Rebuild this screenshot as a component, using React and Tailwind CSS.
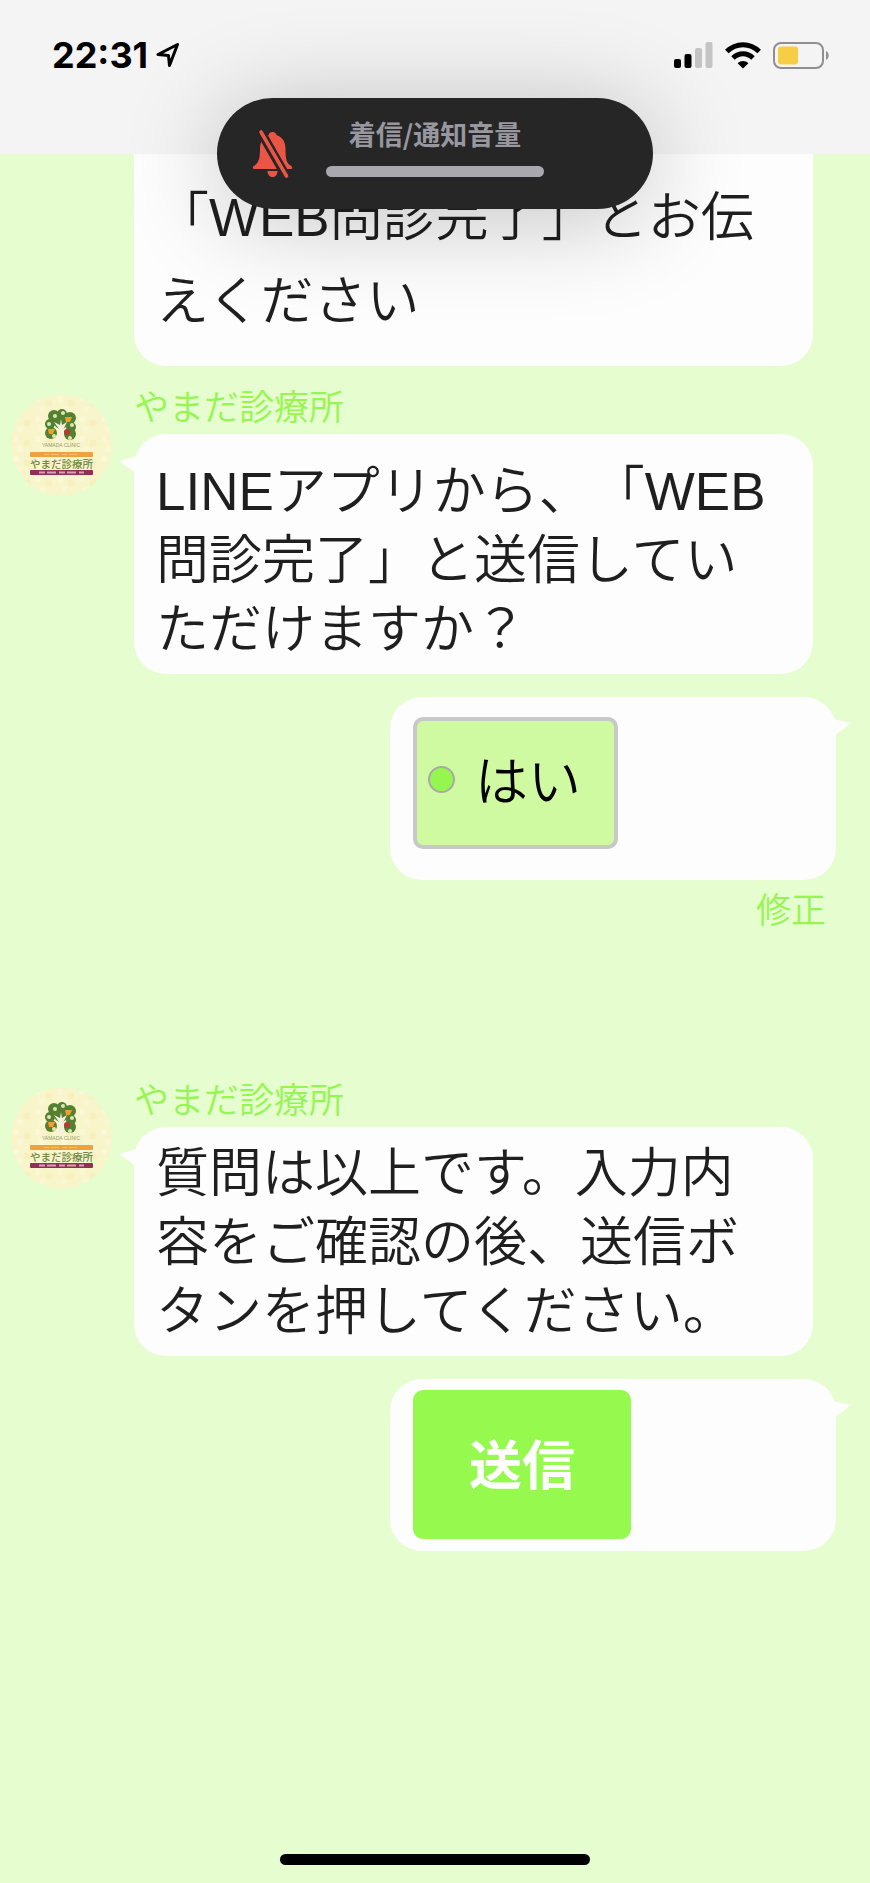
import { useState } from 'react';

const CLINIC = 'やまだ診療所';

function StatusBar() {
  return (
    <header className="flex h-[154px] items-start justify-between bg-[#f4f4f4] pt-[35px] pr-[41px] pl-[52px]">
      <div className="flex h-10 items-center gap-2">
        <span className="font-['Inter',sans-serif] text-[36px] leading-10 font-bold text-black">22:31</span>
        <svg width="24" height="26" viewBox="0 0 24 26" fill="none" stroke="#000" strokeWidth="3" strokeLinejoin="round">
          <path d="M21.5 2.5 L2 12.5 L12.5 13.5 L13.5 23.5 Z" />
        </svg>
      </div>
      <div className="flex h-10 items-center gap-3">
        <svg width="39" height="26" viewBox="0 0 39 26">
          <rect x="0" y="17" width="7" height="9" rx="2" fill="#000" />
          <rect x="10.5" y="12" width="7" height="14" rx="2" fill="#000" />
          <rect x="21" y="6" width="7" height="20" rx="2" fill="#c4c4c4" />
          <rect x="31.5" y="0" width="7" height="26" rx="2" fill="#c4c4c4" />
        </svg>
        <svg width="36" height="27" viewBox="0 0 36 27" fill="none" stroke="#000" strokeWidth="5">
          <path d="M1.8 9.6 C11 0.4 25 0.4 34.2 9.6" />
          <path d="M8 16 C13.8 10.4 22.2 10.4 28 16" />
          <path d="M12.6 21.2 C15.6 18.2 20.4 18.2 23.4 21.2 L18 26.5 Z" fill="#000" stroke="none" />
        </svg>
        <svg width="56" height="28" viewBox="0 0 56 28">
          <rect x="1" y="2" width="49" height="25" rx="7" fill="none" stroke="#8f8f8f" strokeWidth="2" />
          <rect x="5" y="5.5" width="20" height="18" rx="3" fill="#f8cd46" />
          <path d="M53 10 C56.5 11.5 56.5 17.5 53 19 Z" fill="#8f8f8f" />
        </svg>
      </div>
    </header>
  );
}

function VolumeHud() {
  return (
    <div className="absolute top-[98px] left-1/2 z-20 flex h-[111px] w-[436px] -translate-x-1/2 items-center rounded-full bg-[#262626] shadow-[0_10px_100px_rgba(0,0,0,0.24)]">
      <svg className="ml-[35px]" width="42" height="50" viewBox="0 0 42 50">
        <path d="M20.5 3 C18 3 16.8 4.6 16.7 6 C10 8.5 8 14 8 20 C8 30 6.5 34 2.5 36.5 C0 38 .6 40 2.5 40 H38.5 C40.6 40 41 38 38.5 36.5 C34.5 34 33.5 30 33.5 20 C33.5 13 31 8.4 24.4 6 C24.2 4.4 23 3 20.5 3 Z" fill="#eb5545" />
        <path d="M15.5 42 H25.5 C25.5 50 15.5 50 15.5 42 Z" fill="#eb5545" />
        <path d="M6 -2 L38 54" stroke="#262626" strokeWidth="9" />
        <path d="M9 3 L34.5 47" stroke="#eb5545" strokeWidth="3.6" strokeLinecap="round" />
      </svg>
      <div className="ml-8 flex flex-col items-center gap-4 pb-3">
        <span className="font-['Noto_Sans_CJK_JP',sans-serif] text-[27px] leading-8 font-bold text-[#98979f]">着信/通知音量</span>
        <div className="h-[11px] w-[218px] rounded-full bg-[#a9a8ae]" />
      </div>
    </div>
  );
}

function Avatar() {
  return (
    <svg className="mt-[14px] ml-[11px] shrink-0" width="101" height="102" viewBox="0 0 101 102" role="img" aria-label={CLINIC}>
      <defs>
        <pattern id="paper" width="22" height="20" patternUnits="userSpaceOnUse">
          <rect width="22" height="20" fill="#f9f5cb" />
          <circle cx="5" cy="5" r="3" fill="#fbf8d8" />
          <circle cx="16" cy="9" r="3.5" fill="#f7f0be" />
          <circle cx="9" cy="15" r="3" fill="#faf7d4" />
        </pattern>
      </defs>
      <circle cx="50.5" cy="51" r="50.5" fill="url(#paper)" />
      <g fill="#557f31">
        <circle cx="43" cy="22" r="6" />
        <circle cx="51" cy="20" r="5" />
        <circle cx="59" cy="24" r="6" />
        <circle cx="39" cy="30" r="5" />
        <circle cx="60" cy="33" r="5" />
        <circle cx="40" cy="39" r="6" />
        <circle cx="59" cy="40" r="6" />
        <circle cx="50" cy="28" r="7" />
      </g>
      <path d="M47.5 47 L48 35 L43 28 L49 31 L50 25 L51 31 L56 28 L52 36 L52.5 47 Z" fill="#f4f1dd" />
      <g fill="#dfe6b4">
        <circle cx="44" cy="22" r="2" />
        <circle cx="52" cy="19" r="2" />
        <circle cx="38" cy="30" r="2" />
        <circle cx="61" cy="31" r="2" />
        <circle cx="43" cy="42" r="2" />
        <circle cx="59" cy="44" r="2" />
      </g>
      <path d="M54 23 h7 l-2 5 h-4 Z" fill="#eda12d" />
      <path d="M37 35 h7 l-2 5 h-4 Z" fill="#eda12d" />
      <circle cx="56" cy="38" r="3" fill="#b43a35" />
      <text x="50" y="53" textAnchor="middle" fontSize="5" fill="#8f9c72" className="font-['Liberation_Sans',sans-serif] font-normal">YAMADA CLINIC</text>
      <rect x="19" y="58" width="63" height="5" rx="1" fill="#efa13f" />
      <path d="M33 60.5 H69" stroke="#f5c07c" strokeWidth="1" strokeDasharray="5 2 8 3" />
      <text x="50.5" y="74" textAnchor="middle" fontSize="10.5" fill="#6d8745" className="font-['Noto_Sans_CJK_JP',sans-serif] font-medium">{CLINIC}</text>
      <rect x="19" y="76" width="63" height="5" rx="1" fill="#913057" />
      <path d="M28 78.5 H73" stroke="#d3a3b5" strokeWidth="2" strokeDasharray="6 2 9 3" />
    </svg>
  );
}

function ClinicMessage({ children, className }) {
  return (
    <section className="flex items-start pr-[57px]">
      <div className="w-[134px] shrink-0">
        <Avatar />
      </div>
      <div className="min-w-0 flex-1">
        <p className="pt-0.5 text-[35px] leading-[52px] text-[#95f64f]">{CLINIC}</p>
        <div className={`relative rounded-[32px] bg-[#fdfdfd] pr-10 pb-[10px] pl-[22px] ${className}`}>
          <svg className="absolute top-[22px] -left-[15px]" width="18" height="18" viewBox="0 0 18 18">
            <path d="M0 5 L18 0 V18 Z" fill="#fdfdfd" />
          </svg>
          <p className="text-[53px] leading-[69px] text-[#1f1f1f]">{children}</p>
        </div>
      </div>
    </section>
  );
}

function UserBubble({ children, className }) {
  return (
    <div className={`relative mt-[23px] mr-[34px] ml-auto w-[446px] rounded-[32px] bg-[#fdfdfd] px-[23px] ${className}`}>
      <svg className="absolute top-[22px] -right-[15px]" width="18" height="18" viewBox="0 0 18 18">
        <path d="M18 4 L0 0 V18 Z" fill="#fdfdfd" />
      </svg>
      {children}
    </div>
  );
}

export default function App() {
  const [answer, setAnswer] = useState('yes');

  return (
    <div className="relative flex min-h-screen flex-col overflow-hidden bg-[#e5fdcf] font-['Liberation_Sans','Noto_Sans_CJK_JP',sans-serif] font-[350] [text-spacing-trim:space-all]" lang="ja">
      <StatusBar />
      <VolumeHud />

      <main>
        <div className="mr-[57px] mb-[14px] ml-[134px] rounded-b-[32px] bg-[#fdfdfd] pt-[22px] pr-10 pb-[22px] pl-[22px]">
          <p className="text-[53px] leading-[84px] text-[#1f1f1f]">「WEB問診完了」とお伝えください</p>
        </div>

        <ClinicMessage className="pt-[23px]">
          LINEアプリから、「WEB問診完了」と送信していただけますか？
        </ClinicMessage>

        <UserBubble className="pt-5 pb-[31px]">
          <label className="flex h-[132px] w-[205px] items-center gap-5 rounded-[10px] border-4 border-[#c8c8c8] bg-[#d0faa2] pl-[11px] text-[53px] text-black">
            <input
              type="radio"
              name="answer"
              value="yes"
              checked={answer === 'yes'}
              onChange={(e) => setAnswer(e.target.value)}
              className="mb-2 size-[27px] shrink-0 appearance-none rounded-full border-2 border-[#a9a9a9] checked:bg-[#95f64f]"
            />
            <span>はい</span>
          </label>
        </UserBubble>
        <div className="mr-[44px] mb-[133px] flex justify-end pt-0.5">
          <button type="button" className="text-[35px] leading-[58px] text-[#95f64f]">修正</button>
        </div>

        <ClinicMessage className="pt-3">
          質問は以上です。入力内容をご確認の後、送信ボタンを押してください。
        </ClinicMessage>

        <UserBubble className="pt-[11px] pb-3">
          <button type="button" className="block h-[149px] w-[218px] rounded-[10px] bg-[#95f94e] pt-1 text-[53px] font-bold text-white">送信</button>
        </UserBubble>
      </main>

      <div className="mx-auto mt-auto mb-[18px] h-[11px] w-[310px] rounded-full bg-black" />
    </div>
  );
}
